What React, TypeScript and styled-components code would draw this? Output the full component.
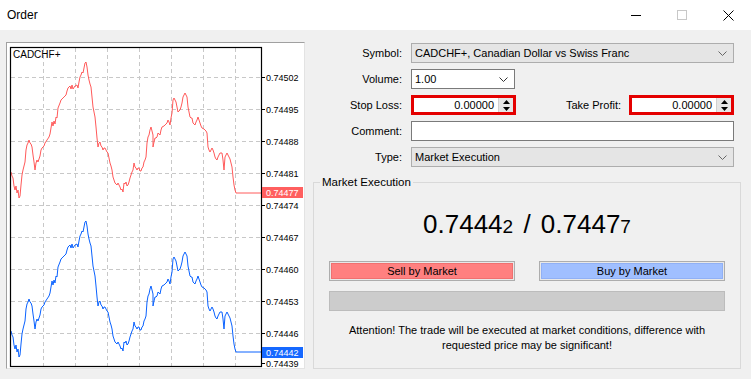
import React from 'react';
import styled, { createGlobalStyle } from 'styled-components';

const GlobalStyle = createGlobalStyle`
  html, body {
    margin: 0;
    padding: 0;
  }
  body {
    background: #f0f0f0;
    font-family: "Liberation Sans", Arial, sans-serif;
    font-size: 11px;
    color: #000;
  }
`;

/* window frame */
const Window = styled.div`
  width: 751px;
  height: 379px;
  background: #f0f0f0;
  display: flex;
  flex-direction: column;
  overflow: hidden;
`;

const TitleBar = styled.div`
  height: 30px;
  flex-shrink: 0;
  background: #fff;
  display: flex;
  align-items: center;
  padding-left: 7px;
`;

const Title = styled.span`
  flex: 1;
  font-size: 12px;
`;

const Controls = styled.div`
  display: flex;
  height: 30px;
`;

const CtrlButton = styled.div`
  width: 46px;
  height: 30px;
  display: flex;
  align-items: center;
  justify-content: center;
`;

const Body = styled.div`
  flex: 1;
  display: flex;
  gap: 8px;
  padding: 12px 0 10px 6px;
`;

/* chart */
const ChartPanel = styled.div`
  width: 299px;
  height: 327px;
  box-sizing: border-box;
  background: #fff;
  border: 1px solid;
  border-color: #a0a0a0 #e3e3e3 #e3e3e3 #a0a0a0;

  svg {
    display: block;
  }
`;

/* form */
const Form = styled.div`
  width: 428px;
  display: flex;
  flex-direction: column;
  padding-top: 1px;
`;

const FieldGrid = styled.div`
  display: grid;
  grid-template-columns: 89px 1fr;
  column-gap: 9px;
  row-gap: 6px;
  align-items: center;
  padding-right: 7px;
`;

const Label = styled.label`
  text-align: right;
  white-space: nowrap;
`;

const Combo = styled.div<{ $flat?: boolean; $width?: number }>`
  height: 20px;
  box-sizing: border-box;
  width: ${p => (p.$width ? `${p.$width}px` : '100%')};
  display: flex;
  align-items: center;
  padding: 0 6px 0 3px;
  border: 1px solid ${p => (p.$flat ? '#adadad' : '#7a7a7a')};
  background: ${p => (p.$flat ? '#e5e5e5' : '#fff')};

  span {
    flex: 1;
    white-space: nowrap;
  }
`;

const TextBox = styled.div`
  height: 20px;
  box-sizing: border-box;
  border: 1px solid #7a7a7a;
  background: #fff;
`;

const PairRow = styled.div`
  display: flex;
  align-items: center;
`;

const InlineLabel = styled.label`
  flex: 1;
  text-align: right;
  padding-right: 8px;
`;

const Spin = styled.div`
  width: 105px;
  height: 20px;
  box-sizing: border-box;
  border: 3px solid #e40000;
  background: #fff;
  display: flex;
`;

const SpinValue = styled.div`
  flex: 1;
  text-align: right;
  padding-right: 4px;
  line-height: 14px;
`;

const SpinArrows = styled.div`
  width: 14px;
  background: #e6e6e6;
  border-left: 1px solid #d0d0d0;
  display: flex;
  flex-direction: column;
  align-items: center;
  justify-content: space-around;
`;

const Group = styled.fieldset`
  flex: 1;
  margin: 8px 0 0;
  padding: 20px 15px 0;
  min-width: 0;
  border: 1px solid #d9d9d9;
  display: flex;
  flex-direction: column;
`;

const Legend = styled.legend`
  padding: 0 2px;
  margin-left: -9px;
  line-height: 14px;
  font-size: 11.5px;
`;

const Prices = styled.div`
  text-align: center;
  font-size: 26px;
  line-height: 30px;
  color: #000;

  small {
    font-size: 19px;
  }
`;

const Slash = styled.span`
  padding: 0 3px;
`;

const ButtonRow = styled.div`
  display: flex;
  justify-content: space-between;
  margin-top: 19px;
`;

const TradeButton = styled.div<{ $fill: string; $edge: string }>`
  width: 186px;
  height: 20px;
  box-sizing: border-box;
  border: 1px solid #adadad;
  padding: 1px;
  background: #e8e8e8;
  display: flex;

  span {
    flex: 1;
    background: ${p => p.$fill};
    box-shadow: inset 0 0 0 1px ${p => p.$edge};
    text-align: center;
    line-height: 16px;
  }
`;

const Progress = styled.div`
  height: 20px;
  margin-top: 10px;
  box-sizing: border-box;
  background: #cccccc;
  border: 1px solid #bcbcbc;
`;

const Notice = styled.p`
  margin: 12px 0 0;
  text-align: center;
  line-height: 15px;
`;

const Chevron = ({ color = '#555' }: { color?: string }) => (
  <svg width="9" height="5" viewBox="0 0 9 5">
    <polyline points="0.5,0.5 4.5,4.5 8.5,0.5" fill="none" stroke={color} strokeWidth="1" />
  </svg>
);

const Arrow = ({ down }: { down?: boolean }) => (
  <svg width="7" height="4" viewBox="0 0 7 4">
    <polygon points={down ? '0,0 7,0 3.5,4' : '0,4 7,4 3.5,0'} fill="#000" />
  </svg>
);

const SpinBox = ({ value }: { value: string }) => (
  <Spin>
    <SpinValue>{value}</SpinValue>
    <SpinArrows>
      <Arrow />
      <Arrow down />
    </SpinArrows>
  </Spin>
);

/* price path of the ask line, bid is the same shifted down */
const askPts =
  '11,172 12,176 13,178 14,186 15,190 16,186 17,193 18,190 19,198 20,196 21,185 22,175 23,170 25,162 26,150 27,145 28,143 29,140 30,143 31,144 32,147 33,155 34,162 35,170 36,163 37,160 38,162 40,156 41,150 42,148 44,146 45,143 47,140 49,137 50,134 51,128 52,122 53,126 54,121 55,124 56,117 57,118 58,108 60,103 61,100 63,98 65,96 66,95 67,91 68,88 70,86 71,89 72,85 73,89 75,86 77,85 78,88 79,82 80,77 81,75 82,72 83,73 84,68 85,63 86,62 87,67 88,75 89,80 90,84 91,87 92,97 93,107 94,112 95,117 96,127 97,138 98,147 99,143 100,142 101,146 102,147 103,150 104,148 105,148 106,150 107,152 108,153 109,158 110,163 111,166 112,170 113,177 114,180 115,183 116,184 117,185 118,183 119,185 120,187 121,190 122,189 123,192 124,183 125,184 126,182 127,186 128,185 129,182 130,178 131,175 132,172 133,170 134,163 135,167 136,168 137,170 138,168 139,168 140,171 141,171 142,168 143,167 144,162 145,160 146,157 147,143 148,137 149,135 150,130 151,127 152,131 153,135 153,147 154,142 155,138 156,138 157,137 158,133 159,134 160,135 161,130 162,127 164,126 165,125 166,124 167,123 168,120 169,122 170,125 171,118 172,113 173,100 174,98 175,100 176,102 177,107 178,112 179,111 180,110 181,107 182,103 183,97 184,95 185,93 186,95 187,97 188,107 189,112 190,117 191,118 192,118 193,123 194,124 195,125 196,122 197,120 198,117 199,120 200,123 201,126 202,128 204,129 205,130 206,131 207,133 208,147 209,150 210,152 211,150 212,148 213,150 214,153 215,157 216,159 217,160 218,157 219,155 220,153 221,153 222,153 223,160 224,170 225,157 226,155 227,153 228,155 229,157 230,159 231,163 232,167 233,177 234,185 235,190 236,193 261,193';

const bidPts = askPts
  .split(' ')
  .map(p => {
    const [x, y] = p.split(',').map(Number);
    return `${x},${y + 159}`;
  })
  .join(' ');

const gridX = [43, 75, 107, 139, 171, 203, 235];
const gridY = [77, 109, 141, 173, 205, 237, 269, 301, 333];

const scale: [string, number][] = [
  ['0.74502', 77],
  ['0.74495', 109],
  ['0.74488', 141],
  ['0.74481', 173],
  ['0.74474', 205],
  ['0.74467', 237],
  ['0.74460', 269],
  ['0.74453', 301],
  ['0.74446', 333],
  ['0.74439', 363],
];

const Chart = () => (
  <svg width="297" height="325" viewBox="7 43 297 325" fontFamily='"Liberation Sans", Arial, sans-serif'>
    {gridX.map(x => (
      <line key={x} x1={x + 0.5} y1={48} x2={x + 0.5} y2={366} stroke="#c8c8c8" strokeDasharray="4 3" />
    ))}
    {gridY.map(y => (
      <line key={y} x1={11} y1={y + 0.5} x2={261} y2={y + 0.5} stroke="#c8c8c8" strokeDasharray="4 3" />
    ))}
    <polyline points={askPts} fill="none" stroke="#ff5a5a" strokeWidth="1" />
    <polyline points={bidPts} fill="none" stroke="#0a62ff" strokeWidth="1" />
    <rect x="10.5" y="47.5" width="251" height="319" fill="none" stroke="#000" strokeWidth="1.2" />
    <text x="13" y="57.5" fontSize="10">CADCHF+</text>
    {scale.map(([t, y]) => (
      <g key={t}>
        <line x1={261} y1={y + 0.5} x2={265} y2={y + 0.5} stroke="#000" />
        <text x="266" y={y + 3.5} fontSize="9">{t}</text>
      </g>
    ))}
    <rect x="262" y="187" width="41" height="11" fill="#ff5f5f" />
    <text x="266" y="195.5" fontSize="9" fill="#fff">0.74477</text>
    <rect x="262" y="347" width="41" height="11" fill="#1668ff" />
    <text x="266" y="355.5" fontSize="9" fill="#fff">0.74442</text>
  </svg>
);

export default function App() {
  return (
    <>
      <GlobalStyle />
      <Window>
        <TitleBar>
          <Title>Order</Title>
          <Controls>
            <CtrlButton>
              <svg width="10" height="1" viewBox="0 0 10 1">
                <rect width="10" height="1" fill="#000" />
              </svg>
            </CtrlButton>
            <CtrlButton>
              <svg width="10" height="10" viewBox="0 0 10 10">
                <rect x="0.5" y="0.5" width="9" height="9" fill="none" stroke="#c8c8c8" />
              </svg>
            </CtrlButton>
            <CtrlButton>
              <svg width="11" height="11" viewBox="0 0 11 11">
                <path d="M0.5 0.5 L10.5 10.5 M10.5 0.5 L0.5 10.5" stroke="#000" strokeWidth="1" />
              </svg>
            </CtrlButton>
          </Controls>
        </TitleBar>

        <Body>
          <ChartPanel>
            <Chart />
          </ChartPanel>

          <Form>
            <FieldGrid>
              <Label>Symbol:</Label>
              <Combo $flat>
                <span>CADCHF+, Canadian Dollar vs Swiss Franc</span>
                <Chevron color="#666" />
              </Combo>

              <Label>Volume:</Label>
              <Combo $width={104}>
                <span>1.00</span>
                <Chevron color="#333" />
              </Combo>

              <Label>Stop Loss:</Label>
              <PairRow>
                <SpinBox value="0.00000" />
                <InlineLabel>Take Profit:</InlineLabel>
                <SpinBox value="0.00000" />
              </PairRow>

              <Label>Comment:</Label>
              <TextBox />

              <Label>Type:</Label>
              <Combo $flat>
                <span>Market Execution</span>
                <Chevron color="#666" />
              </Combo>
            </FieldGrid>

            <Group>
              <Legend>Market Execution</Legend>
              <Prices>
                0.7444<small>2</small>
                <Slash> / </Slash>
                0.7447<small>7</small>
              </Prices>
              <ButtonRow>
                <TradeButton $fill="#ff8080" $edge="#f07070">
                  <span>Sell by Market</span>
                </TradeButton>
                <TradeButton $fill="#a0bfff" $edge="#90b0f5">
                  <span>Buy by Market</span>
                </TradeButton>
              </ButtonRow>
              <Progress />
              <Notice>
                Attention! The trade will be executed at market conditions, difference with
                <br />
                requested price may be significant!
              </Notice>
            </Group>
          </Form>
        </Body>
      </Window>
    </>
  );
}
